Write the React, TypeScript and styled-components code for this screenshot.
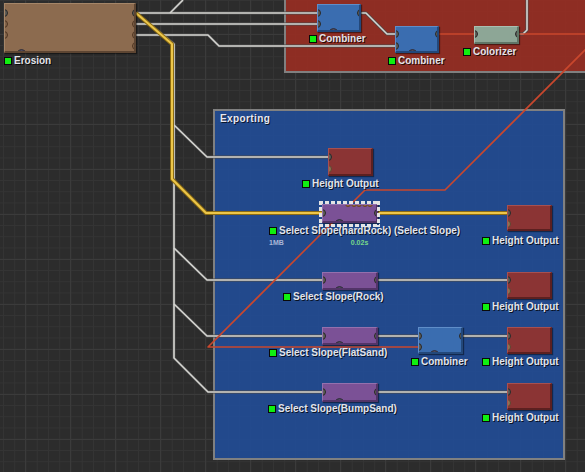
import styled, { createGlobalStyle } from "styled-components";

const GlobalStyle = createGlobalStyle`
  html, body {
    margin: 0;
    padding: 0;
    background: #2c2c2c;
  }
`;

const Canvas = styled.div`
  position: relative;
  width: 585px;
  height: 472px;
  overflow: hidden;
  background-color: #2c2c2c;
  background-image:
    linear-gradient(#3b3b3b 1px, transparent 1px),
    linear-gradient(90deg, #3b3b3b 1px, transparent 1px),
    linear-gradient(#343434 1px, transparent 1px),
    linear-gradient(90deg, #343434 1px, transparent 1px);
  background-size: 45px 45px, 45px 45px, 11.25px 11.25px, 11.25px 11.25px;
  background-position: 25px 34px, 25px 34px, 3px 0px, 3px 0px;
  font-family: "Liberation Sans", Arial, sans-serif;
`;

const Group = styled.div<{ $x: number; $y: number; $w: number; $h: number; $fill: string }>`
  position: absolute;
  left: ${(p) => p.$x}px;
  top: ${(p) => p.$y}px;
  width: ${(p) => p.$w}px;
  height: ${(p) => p.$h}px;
  box-sizing: border-box;
  background: ${(p) => p.$fill};
  border: 2px solid #808080;
  padding: 2px 5px;
`;

const GroupTitle = styled.div`
  font-size: 10px;
  font-weight: bold;
  letter-spacing: 0.4px;
  color: #e8e8f0;
  text-shadow: 1px 1px 0 rgba(0, 0, 0, 0.7);
`;

const Wires = styled.svg`
  position: absolute;
  left: 0;
  top: 0;
  pointer-events: none;
`;

const NodeBox = styled.div<{ $x: number; $y: number; $w: number; $h: number }>`
  position: absolute;
  left: ${(p) => p.$x}px;
  top: ${(p) => p.$y}px;
  width: ${(p) => p.$w}px;
  height: ${(p) => p.$h}px;
`;

const Body = styled.div<{ $color: string; $light: string; $dark: string }>`
  position: relative;
  width: 100%;
  height: 100%;
  box-sizing: border-box;
  overflow: hidden;
  background: ${(p) => p.$color};
  border-top: 1px solid ${(p) => p.$light};
  border-left: 1px solid ${(p) => p.$light};
  border-right: 2px solid ${(p) => p.$dark};
  border-bottom: 2px solid ${(p) => p.$dark};
  box-shadow: 1px 1px 1px rgba(0, 0, 0, 0.45);
`;

type Side = "l" | "r" | "b" | "t";

const Port = styled.span<{ $side: Side; $at: number; $on?: boolean; $size: number; $ring: string; $idle: string }>`
  position: absolute;
  box-sizing: border-box;
  width: ${(p) => p.$size}px;
  height: ${(p) => p.$size}px;
  border-radius: 50%;
  background: ${(p) => (p.$on ? "#5f5e58" : p.$idle)};
  border: 1px solid ${(p) => (p.$on ? "#272727" : p.$ring)};
  ${(p) => (p.$side === "l" ? `left: ${-p.$size / 2 - 1}px;` : "")}
  ${(p) => (p.$side === "r" ? `right: ${-p.$size / 2 - 2}px;` : "")}
  ${(p) => (p.$side === "l" || p.$side === "r" ? `top: ${p.$at - p.$size / 2 - 1}px;` : "")}
  ${(p) => (p.$side === "b" ? `bottom: ${-p.$size / 2 - 2}px; background: #4d4a5e; border-color: #2e2c38;` : "")}
  ${(p) => (p.$side === "t" ? `top: ${-p.$size / 2 - 1}px;` : "")}
  ${(p) => (p.$side === "b" || p.$side === "t" ? `left: ${p.$at - p.$size / 2 - 1}px;` : "")}
`;

const Marquee = styled.div`
  position: absolute;
  inset: -3px -2px -4px -3px;
  pointer-events: none;
  background:
    repeating-linear-gradient(90deg, #e4e4e4 0 4px, transparent 4px 6px) top left / 100% 3px no-repeat,
    repeating-linear-gradient(90deg, #e4e4e4 0 4px, transparent 4px 6px) bottom left / 100% 3px no-repeat,
    repeating-linear-gradient(180deg, #e4e4e4 0 4px, transparent 4px 6px) top left / 3px 100% no-repeat,
    repeating-linear-gradient(180deg, #e4e4e4 0 4px, transparent 4px 6px) top right / 3px 100% no-repeat;
`;

const Label = styled.div<{ $x: number; $y: number }>`
  position: absolute;
  left: ${(p) => p.$x}px;
  top: ${(p) => p.$y - 2}px;
  display: flex;
  align-items: center;
  gap: 2px;
  height: 11px;
  white-space: nowrap;
  font-size: 10px;
  font-weight: bold;
  color: #e2e4ea;
  text-shadow: 1px 1px 0 rgba(0, 0, 0, 0.75);
`;

const Led = styled.span`
  display: inline-block;
  width: 8px;
  height: 8px;
  box-sizing: border-box;
  background: #10f010;
  border: 1px solid #0a0a0a;
`;

const Stats = styled.div<{ $x: number; $y: number }>`
  position: absolute;
  left: ${(p) => p.$x}px;
  top: ${(p) => p.$y}px;
  display: flex;
  gap: 67px;
  font-size: 7px;
  font-weight: bold;
  color: #a9b6d6;
`;

const Time = styled.span`
  color: #78d88a;
`;

type Palette = { color: string; light: string; dark: string; ring: string; idle: string };

const brown: Palette = { color: "#8c6b4f", light: "#a58668", dark: "#5d4532", ring: "#4e3421", idle: "rgba(0,0,0,0.06)" };
const blue: Palette = { color: "#3a6db0", light: "#5f8dc8", dark: "#23487a", ring: "#24497a", idle: "#6f6250" };
const sage: Palette = { color: "#8da696", light: "#a9bfb1", dark: "#5f7566", ring: "#5f7566", idle: "#6f6250" };
const crimson: Palette = { color: "#8b3434", light: "#a65050", dark: "#5c2020", ring: "#5e4430", idle: "#8f7152" };
const violet: Palette = { color: "#7b5196", light: "#9470ad", dark: "#523468", ring: "#523468", idle: "#6f6250" };

type NodeProps = {
  x: number;
  y: number;
  w: number;
  h: number;
  pal: Palette;
  left?: [number, boolean][];
  right?: [number, boolean][];
  bottom?: number;
  top?: number[];
  selected?: boolean;
};

const Node = ({ x, y, w, h, pal, left = [], right = [], bottom, top = [], selected }: NodeProps) => (
  <NodeBox $x={x} $y={y} $w={w} $h={h}>
    <Body $color={pal.color} $light={pal.light} $dark={pal.dark}>
      {left.map(([at, on]) => (
        <Port key={"l" + at} $side="l" $at={at} $on={on} $size={8} $ring={pal.ring} $idle={pal.idle} />
      ))}
      {right.map(([at, on]) => (
        <Port key={"r" + at} $side="r" $at={at} $on={on} $size={8} $ring={pal.ring} $idle={pal.idle} />
      ))}
      {bottom !== undefined && <Port $side="b" $at={bottom} $on $size={9} $ring={pal.ring} $idle={pal.idle} />}
      {top.map((at) => (
        <Port key={"t" + at} $side="t" $at={at} $size={6} $ring="#6a4226" $idle="#9a6a40" />
      ))}
    </Body>
    {selected && <Marquee />}
  </NodeBox>
);

const Tag = ({ x, y, text }: { x: number; y: number; text: string }) => (
  <Label $x={x} $y={y}>
    <Led />
    <span>{text}</span>
  </Label>
);

const white = [
  "M136,13 H317",
  "M136,24 H317",
  "M136,35 H208 L219,46 H395",
  "M170,13 L183,0",
  "M361,13 H366 L387,34 H395",
  "M519,34 H523 L527,30 V0",
  "M136,13 L174,44 V358 L208,392 H322",
  "M174,125 L207,157 H328",
  "M174,248 L207,280 H322",
  "M174,304 L207,336 H322",
  "M378,280 H507",
  "M378,336 H418",
  "M463,336 H507",
  "M378,392 H507",
];

const red = ["M439,34 H474", "M519,34 H585", "M418,347 H208 L365,190 H445 L590,45"];

const yellow = ["M136,13 L172,44 V179 L206,213 H322", "M378,213 H507"];

export default function App() {
  return (
    <>
      <GlobalStyle />
      <Canvas>
        <Group $x={284} $y={-2} $w={310} $h={75} $fill="rgba(151,46,35,0.92)" />
        <Group $x={213} $y={109} $w={352} $h={351} $fill="rgba(34,76,149,0.92)">
          <GroupTitle>Exporting</GroupTitle>
        </Group>

        <Wires width={585} height={472} viewBox="0 0 585 472">
          <g fill="none" strokeLinejoin="round">
            {white.map((d) => (
              <path key={"wu" + d} d={d} stroke="#4a4a4a" strokeWidth={3} />
            ))}
            {white.map((d) => (
              <path key={"w" + d} d={d} stroke="#d6d6d2" strokeWidth={1.6} />
            ))}
            {red.map((d) => (
              <path key={"r" + d} d={d} stroke="#c9472d" strokeWidth={1.6} />
            ))}
            {yellow.map((d) => (
              <path key={"yu" + d} d={d} stroke="#8c6c12" strokeWidth={4} />
            ))}
            {yellow.map((d) => (
              <path key={"y" + d} d={d} stroke="#ecc64a" strokeWidth={2} />
            ))}
          </g>
        </Wires>

        <Node x={4} y={3} w={132} h={50} pal={brown}
          left={[[10, true], [21, false], [32, false]]}
          right={[[10, true], [21, false], [32, false], [43, false]]}
          bottom={17} />
        <Node x={317} y={4} w={44} h={28} pal={blue} left={[[9, true], [20, true]]} right={[[9, true]]} bottom={16} />
        <Node x={395} y={26} w={44} h={27} pal={blue} left={[[8, true], [20, true]]} right={[[8, true]]} bottom={17} />
        <Node x={474} y={26} w={45} h={18} pal={sage} left={[[8, true]]} right={[[8, true]]} />

        <Node x={328} y={148} w={45} h={28} pal={crimson} left={[[9, true], [21, false]]} />
        <Node x={322} y={204} w={56} h={19} pal={violet} left={[[9, true]]} right={[[9, true]]} bottom={17}
          top={[26, 31.5, 37, 42.5, 48]} selected />
        <Node x={507} y={205} w={45} h={26} pal={crimson} left={[[8, true], [19, false]]} />
        <Node x={322} y={272} w={56} h={18} pal={violet} left={[[8, true]]} right={[[8, true]]} bottom={17} />
        <Node x={507} y={272} w={45} h={27} pal={crimson} left={[[8, true], [19, false]]} />
        <Node x={322} y={327} w={56} h={18} pal={violet} left={[[9, true]]} right={[[9, true]]} bottom={17} />
        <Node x={418} y={327} w={45} h={27} pal={blue} left={[[9, true], [20, true]]} right={[[9, true]]} bottom={16} />
        <Node x={507} y={327} w={45} h={27} pal={crimson} left={[[9, true], [20, false]]} />
        <Node x={322} y={383} w={56} h={19} pal={violet} left={[[9, true]]} right={[[9, true]]} bottom={17} />
        <Node x={507} y={383} w={45} h={27} pal={crimson} left={[[9, true], [20, false]]} />

        <Tag x={4} y={57} text="Erosion" />
        <Tag x={309} y={35} text="Combiner" />
        <Tag x={388} y={57} text="Combiner" />
        <Tag x={463} y={48} text="Colorizer" />
        <Tag x={302} y={180} text="Height Output" />
        <Tag x={269} y={227} text="Select Slope(hardRock) (Select Slope)" />
        <Stats $x={269} $y={239}>
          <span>1MB</span>
          <Time>0.02s</Time>
        </Stats>
        <Tag x={482} y={237} text="Height Output" />
        <Tag x={283} y={293} text="Select Slope(Rock)" />
        <Tag x={482} y={303} text="Height Output" />
        <Tag x={269} y={349} text="Select Slope(FlatSand)" />
        <Tag x={411} y={358} text="Combiner" />
        <Tag x={482} y={358} text="Height Output" />
        <Tag x={268} y={405} text="Select Slope(BumpSand)" />
        <Tag x={482} y={414} text="Height Output" />
      </Canvas>
    </>
  );
}
